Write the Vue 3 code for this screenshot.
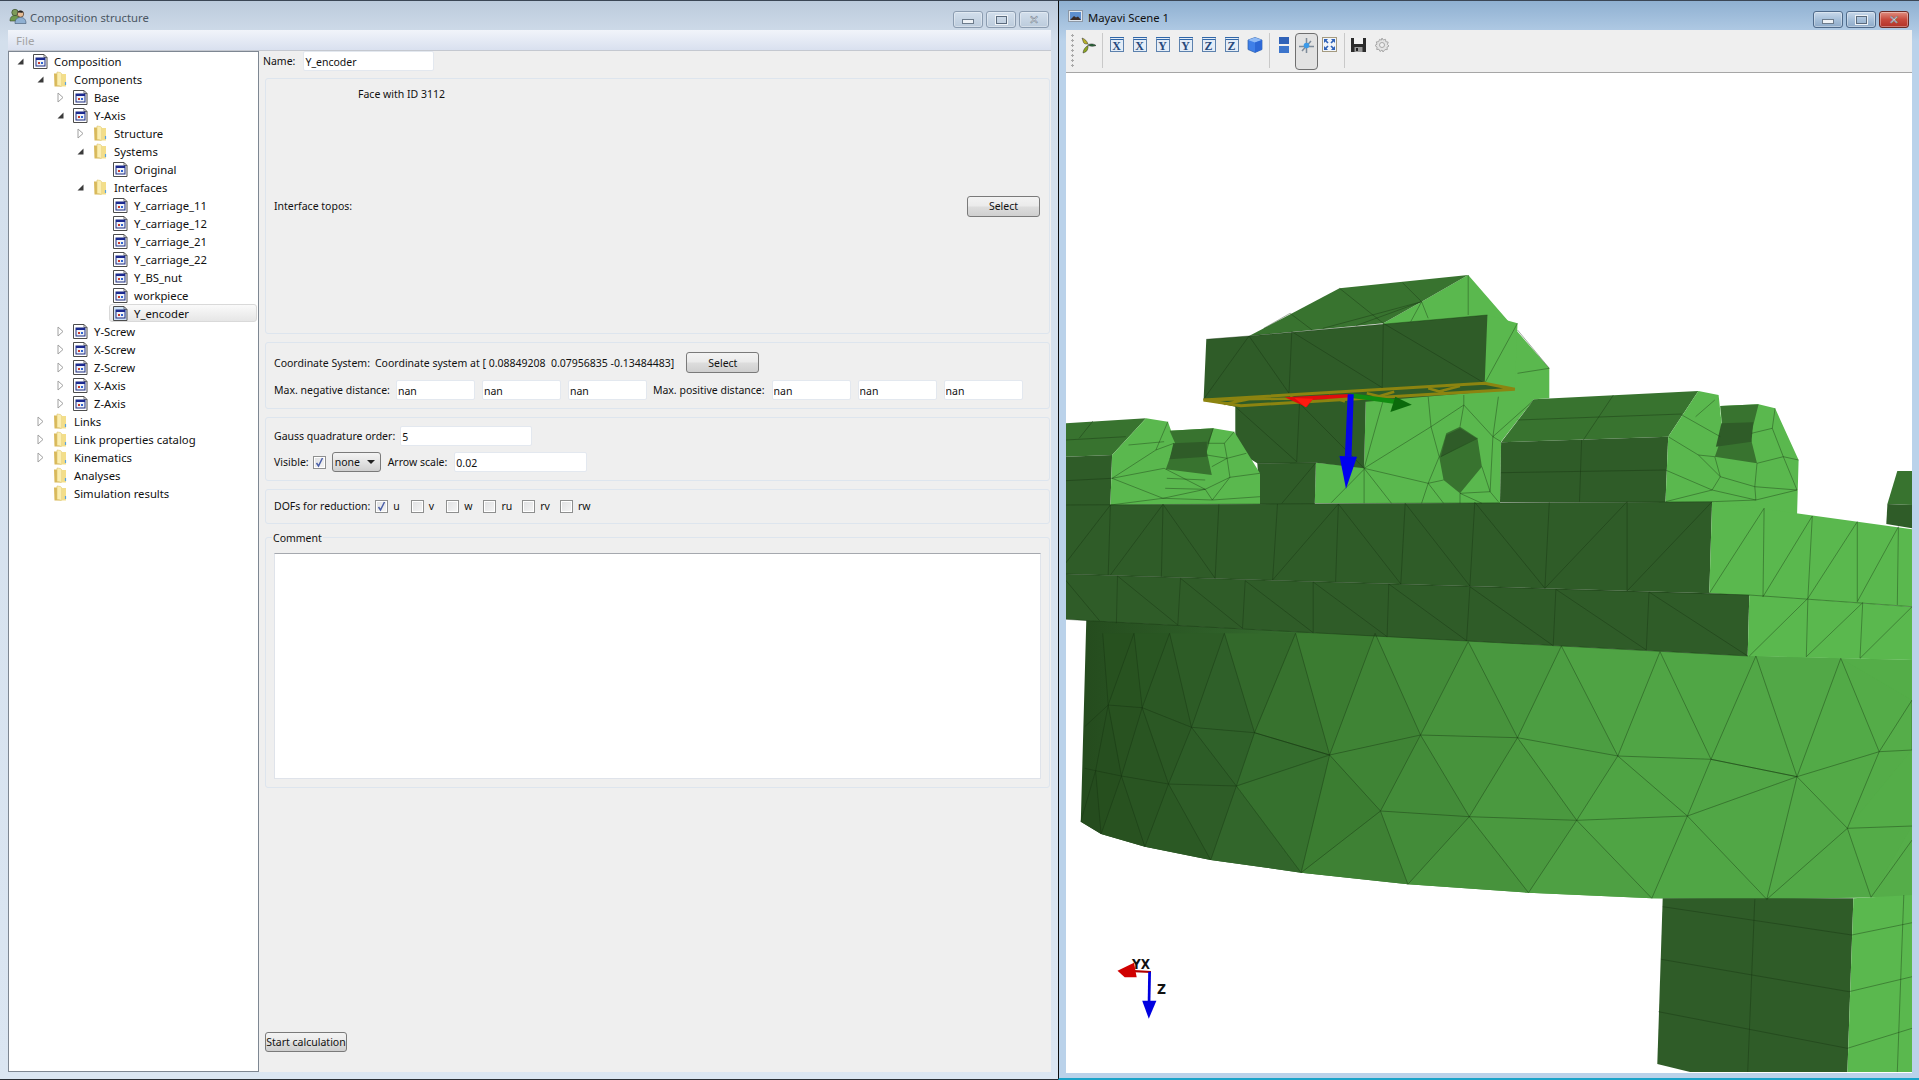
<script setup>
const tree = [
  { label: 'Composition', level: 0, arrow: 'open', icon: 'doc' },
  { label: 'Components', level: 1, arrow: 'open', icon: 'folder' },
  { label: 'Base', level: 2, arrow: 'closed', icon: 'doc' },
  { label: 'Y-Axis', level: 2, arrow: 'open', icon: 'doc' },
  { label: 'Structure', level: 3, arrow: 'closed', icon: 'folder' },
  { label: 'Systems', level: 3, arrow: 'open', icon: 'folder' },
  { label: 'Original', level: 4, arrow: '', icon: 'doc' },
  { label: 'Interfaces', level: 3, arrow: 'open', icon: 'folder' },
  { label: 'Y_carriage_11', level: 4, arrow: '', icon: 'doc' },
  { label: 'Y_carriage_12', level: 4, arrow: '', icon: 'doc' },
  { label: 'Y_carriage_21', level: 4, arrow: '', icon: 'doc' },
  { label: 'Y_carriage_22', level: 4, arrow: '', icon: 'doc' },
  { label: 'Y_BS_nut', level: 4, arrow: '', icon: 'doc' },
  { label: 'workpiece', level: 4, arrow: '', icon: 'doc' },
  { label: 'Y_encoder', level: 4, arrow: '', icon: 'doc', selected: true },
  { label: 'Y-Screw', level: 2, arrow: 'closed', icon: 'doc' },
  { label: 'X-Screw', level: 2, arrow: 'closed', icon: 'doc' },
  { label: 'Z-Screw', level: 2, arrow: 'closed', icon: 'doc' },
  { label: 'X-Axis', level: 2, arrow: 'closed', icon: 'doc' },
  { label: 'Z-Axis', level: 2, arrow: 'closed', icon: 'doc' },
  { label: 'Links', level: 1, arrow: 'closed', icon: 'folder' },
  { label: 'Link properties catalog', level: 1, arrow: 'closed', icon: 'folder' },
  { label: 'Kinematics', level: 1, arrow: 'closed', icon: 'folder' },
  { label: 'Analyses', level: 1, arrow: '', icon: 'folder' },
  { label: 'Simulation results', level: 1, arrow: '', icon: 'folder' },
];

const dofs = [
  { name: 'u', on: true, gap: 11 },
  { name: 'v', gap: 12 },
  { name: 'w', gap: 11 },
  { name: 'ru', gap: 10 },
  { name: 'rv', gap: 10 },
  { name: 'rw', gap: 0 },
];

const views = ['X', 'X', 'Y', 'Y', 'Z', 'Z'];

// mesh coordinates are read off two crops, so convert them back to page pixels
const DARK = '#2f5c28';
const MID = '#38732f';
const LIGHT = '#5ab84e';
const px = (x) => +(1060 + x / 1.825).toFixed(1);
const py = (y, top) => +(top + y / 3).toFixed(1);

function poly(fill, top, c) {
  const pts = [];
  for (let i = 0; i < c.length; i += 2) pts.push(px(c[i]) + ',' + py(c[i + 1], top));
  return { fill, points: pts.join(' ') };
}
function lines(top, list) {
  return list
    .map((c) => {
      let d = '';
      for (let i = 0; i < c.length; i += 2) d += (i ? 'L' : 'M') + px(c[i]) + ' ' + py(c[i + 1], top);
      return d;
    })
    .join('');
}

// cylinder is flat shaded, facet colour only depends on where it sits horizontally
const shadeStops = [
  [1085, [36, 74, 29]],
  [1115, [39, 81, 31]],
  [1224, [47, 96, 41]],
  [1334, [59, 124, 49]],
  [1443, [69, 144, 59]],
  [1608, [79, 163, 68]],
  [1827, [82, 169, 71]],
  [1912, [85, 174, 73]],
];
function shade(x) {
  let i = 0;
  while (i < shadeStops.length - 2 && x > shadeStops[i + 1][0]) i++;
  const [x0, a] = shadeStops[i];
  const [x1, b] = shadeStops[i + 1];
  const t = Math.max(0, Math.min(1, (x - x0) / (x1 - x0)));
  const c = a.map((v, k) => Math.round(v + (b[k] - v) * t));
  return `rgb(${c[0]},${c[1]},${c[2]})`;
}
function facet(a, b, c, d, e, f) {
  return poly(shade(px((a + c + e) / 3)), 640, [a, b, c, d, e, f]);
}
function zigzag(c) {
  const out = [];
  for (let i = 0; i + 5 < c.length; i += 2) out.push(facet(c[i], c[i + 1], c[i + 2], c[i + 3], c[i + 4], c[i + 5]));
  return out;
}

const zigTop = [78, -20, 88, 195, 135, -20, 150, 203, 200, -20, 240, 262, 300, -20, 355, 278, 430, -20, 492, 345, 575, -20, 658, 285, 745, 5, 835, 293, 915, 18, 1018, 348, 1095, 35, 1188, 358, 1270, 48, 1345, 410, 1425, 55, 1495, 335, 1555, 180, 1555, 330];
const zigMidA = [65, 392, 88, 195, 112, 408, 150, 203, 198, 432, 240, 262, 322, 438, 355, 278, 492, 345];
const zigMidB = [492, 345, 585, 513, 658, 285, 747, 530, 835, 293, 943, 541, 1018, 348, 1145, 528, 1188, 358, 1345, 410];
const zigBottom = [38, 545, 65, 392, 75, 582, 112, 408, 155, 620, 198, 432, 275, 660, 322, 438, 440, 698, 585, 513, 635, 733, 747, 530, 855, 758, 943, 541, 1080, 775, 1145, 528, 1290, 778, 1437, 565, 1480, 772, 1555, 558, 1555, 770];

const facets = [
  ...zigzag(zigTop),
  ...zigzag(zigMidA),
  ...zigzag(zigMidB),
  ...zigzag(zigBottom),
  facet(1425, 55, 1555, 60, 1555, 180),
  facet(322, 438, 492, 345, 440, 698),
  facet(492, 345, 585, 513, 440, 698),
  facet(1145, 528, 1345, 410, 1290, 778),
  facet(1345, 410, 1437, 565, 1290, 778),
  facet(1345, 410, 1437, 565, 1495, 335),
  facet(1437, 565, 1495, 335, 1555, 330),
  facet(1437, 565, 1555, 330, 1555, 558),
];

const faces = [
  // central column and top
  poly(LIGHT, 260, [745, 45, 893, 325, 893, 415, 865, 418, 805, 545, 803, 730, 465, 730, 467, 608, 555, 620, 558, 420, 590, 190, 660, 125]),
  poly(MID, 260, [345, 228, 510, 85, 745, 45, 660, 125, 590, 190]),
  poly(LIGHT, 260, [780, 165, 835, 190, 830, 390, 775, 370]),
  poly(DARK, 260, [267, 238, 345, 228, 780, 165, 775, 370, 262, 420]),
  poly(DARK, 260, [262, 420, 775, 370, 830, 388, 558, 425, 320, 440]),
  poly(DARK, 260, [320, 437, 558, 420, 555, 625, 467, 608, 360, 610, 320, 570]),
  poly(DARK, 260, [360, 610, 467, 608, 465, 732, 365, 732]),
  poly(MID, 260, [730, 500, 762, 535, 770, 620, 730, 700, 700, 660, 692, 590, 705, 520]),
  poly(DARK, 260, [705, 525, 730, 505, 760, 535, 695, 590]),
  // left lump
  poly(MID, 260, [10, 490, 157, 475, 95, 585, 10, 590]),
  poly(DARK, 260, [10, 590, 95, 585, 92, 735, 10, 735]),
  poly(LIGHT, 260, [157, 475, 197, 485, 210, 545, 200, 512, 280, 505, 318, 515, 365, 640, 365, 732, 92, 735, 95, 585]),
  poly(MID, 260, [200, 512, 280, 505, 268, 575, 277, 645, 193, 628, 210, 550]),
  poly(DARK, 260, [207, 550, 268, 545, 268, 590, 200, 598]),
  // right lump
  poly(MID, 260, [865, 418, 1165, 393, 1110, 530, 805, 547]),
  poly(DARK, 260, [805, 547, 1110, 530, 1105, 727, 803, 727]),
  poly(LIGHT, 260, [1165, 393, 1202, 405, 1210, 530, 1205, 438, 1275, 433, 1305, 445, 1348, 600, 1345, 770, 1190, 727, 1105, 727, 1110, 530]),
  poly(MID, 260, [1205, 438, 1275, 433, 1260, 530, 1272, 610, 1195, 590, 1210, 520]),
  poly(DARK, 260, [1207, 490, 1265, 487, 1262, 545, 1197, 560]),
  // far right stub
  poly(MID, 260, [1528, 633, 1555, 633, 1555, 735, 1510, 732]),
  poly(DARK, 260, [1510, 732, 1555, 735, 1555, 805, 1508, 792]),
  // belts
  poly(DARK, 260, [10, 735, 1190, 725, 1185, 1000, 10, 942]),
  poly(LIGHT, 260, [1190, 725, 1555, 808, 1555, 1040, 1185, 1000]),
  poly(DARK, 260, [10, 942, 1185, 1000, 1258, 1005, 1255, 1188, 52, 1082, 10, 1078]),
  poly(LIGHT, 260, [1258, 1005, 1555, 1040, 1555, 1200, 1255, 1188]),
];

const cylinder = poly('url(#cyl)', 640, [48, -60, 1255, 47, 1555, 60, 1555, 765, 1480, 772, 1290, 778, 1080, 775, 855, 758, 635, 733, 440, 698, 275, 660, 155, 620, 75, 582, 38, 545]);

const foot = [
  poly(DARK, 640, [1100, 775, 1448, 775, 1437, 1296, 1150, 1296, 1090, 1272]),
  poly(LIGHT, 640, [1448, 775, 1555, 765, 1555, 1296, 1437, 1296]),
];

const mesh =
  lines(260, [
    [372, 205, 420, 160, 460, 210],
    [510, 85, 590, 190],
    [625, 68, 660, 125, 480, 205],
    [540, 197, 660, 125],
    [345, 228, 262, 418],
    [345, 228, 418, 400],
    [423, 215, 418, 400],
    [423, 215, 590, 385],
    [590, 190, 588, 385],
    [590, 190, 775, 370],
    [267, 238, 345, 228, 780, 165],
    [835, 190, 775, 370],
    [835, 210, 893, 325],
    [835, 340, 893, 325],
    [745, 45, 745, 165],
    [660, 125, 640, 185],
    [660, 125, 672, 175],
    [320, 440, 432, 605],
    [437, 430, 432, 605],
    [437, 430, 555, 625],
    [360, 610, 467, 608],
    [467, 608, 405, 730],
    [555, 625, 677, 500],
    [555, 625, 672, 670],
    [555, 625, 605, 730],
    [555, 625, 555, 730],
    [555, 628, 495, 728],
    [590, 420, 555, 625],
    [672, 410, 677, 500],
    [737, 435, 677, 500],
    [737, 435, 730, 500],
    [737, 435, 790, 530],
    [737, 405, 737, 435],
    [800, 410, 790, 530],
    [865, 420, 790, 530],
    [805, 545, 790, 530],
    [790, 530, 785, 695],
    [677, 500, 692, 590],
    [692, 590, 672, 670],
    [672, 670, 660, 730],
    [672, 670, 700, 660],
    [672, 670, 700, 730],
    [730, 700, 730, 730],
    [730, 700, 770, 730],
    [785, 695, 730, 700],
    [785, 695, 800, 725],
    [770, 620, 785, 695],
    [762, 535, 695, 590],
    [60, 483, 35, 535],
    [10, 540, 120, 530],
    [10, 662, 95, 655],
    [95, 655, 190, 625],
    [95, 655, 188, 715],
    [92, 735, 188, 715],
    [188, 715, 265, 688],
    [188, 715, 278, 720],
    [278, 720, 265, 688],
    [265, 688, 310, 652],
    [310, 652, 365, 640],
    [310, 652, 278, 720],
    [278, 720, 365, 710],
    [190, 625, 265, 688],
    [195, 655, 265, 660],
    [192, 685, 265, 688],
    [95, 655, 175, 570],
    [175, 570, 208, 550],
    [197, 485, 175, 570],
    [125, 555, 190, 545],
    [280, 505, 270, 550],
    [318, 515, 300, 550],
    [300, 550, 270, 550],
    [300, 550, 305, 595],
    [305, 595, 340, 580],
    [305, 595, 268, 585],
    [305, 595, 310, 652],
    [277, 620, 305, 595],
    [1010, 405, 955, 540],
    [835, 480, 1135, 462],
    [952, 540, 948, 725],
    [805, 638, 1105, 630],
    [1105, 630, 1190, 690],
    [1105, 725, 1190, 690],
    [1190, 690, 1270, 720],
    [1270, 720, 1345, 690],
    [1205, 650, 1268, 680],
    [1205, 650, 1190, 690],
    [1268, 680, 1345, 690],
    [1268, 680, 1270, 720],
    [1195, 590, 1205, 650],
    [1165, 585, 1205, 650],
    [1110, 530, 1165, 585],
    [1165, 585, 1195, 590],
    [1135, 465, 1205, 530],
    [1195, 420, 1160, 470],
    [1272, 610, 1268, 680],
    [1272, 610, 1320, 590],
    [1320, 590, 1348, 600],
    [1320, 590, 1345, 690],
    [1305, 445, 1300, 505],
    [1300, 505, 1262, 520],
    [1300, 505, 1320, 590],
    [1270, 720, 1190, 725],
    // upper belt, dark side
    [10, 735, 1190, 725],
    [92, 735, 88, 945],
    [92, 735, 10, 910],
    [188, 733, 92, 945],
    [188, 733, 185, 950],
    [188, 733, 283, 955],
    [290, 733, 283, 955],
    [397, 732, 388, 960],
    [508, 732, 388, 960],
    [508, 732, 503, 965],
    [508, 732, 622, 972],
    [630, 730, 622, 972],
    [630, 730, 748, 978],
    [757, 727, 748, 978],
    [757, 727, 885, 985],
    [893, 727, 885, 985],
    [1035, 725, 885, 985],
    [1035, 725, 1035, 993],
    [1190, 725, 1035, 993],
    [10, 942, 1258, 1005],
    // lower belt
    [10, 960, 72, 1082],
    [105, 948, 103, 1090],
    [105, 948, 215, 1095],
    [220, 955, 215, 1095],
    [220, 955, 333, 1105],
    [338, 962, 333, 1105],
    [338, 962, 462, 1118],
    [462, 966, 462, 1118],
    [462, 966, 597, 1130],
    [600, 972, 597, 1130],
    [600, 972, 742, 1142],
    [748, 980, 742, 1142],
    [748, 980, 900, 1157],
    [905, 988, 900, 1157],
    [905, 988, 1070, 1170],
    [1075, 996, 1070, 1170],
    [1075, 996, 1255, 1188],
    [10, 1078, 52, 1082, 1255, 1188],
    // belts, light side
    [1285, 745, 1185, 1000],
    [1285, 745, 1283, 1010],
    [1373, 768, 1283, 1010],
    [1373, 768, 1365, 1015],
    [1455, 785, 1365, 1015],
    [1455, 785, 1455, 1025],
    [1530, 800, 1455, 1025],
    [1530, 800, 1528, 1035],
    [1365, 1015, 1258, 1188],
    [1365, 1015, 1362, 1190],
    [1465, 1028, 1362, 1190],
    [1465, 1028, 1460, 1195],
    [1555, 1040, 1460, 1195],
    [1258, 1005, 1555, 1040],
  ]) +
  lines(640, [
    zigTop,
    // rings
    [45, 260, 88, 195, 150, 203, 240, 262, 355, 278, 492, 345, 658, 285, 835, 293, 1018, 348, 1188, 358, 1345, 410, 1495, 335, 1555, 330],
    [45, 385, 65, 392, 112, 408, 198, 432, 322, 438, 492, 345],
    [585, 513, 747, 530, 943, 541, 1145, 528, 1345, 410],
    [1437, 565, 1555, 558],
    // middle ring to lower ring
    zigMidA,
    zigMidB,
    [1345, 410, 1437, 565, 1495, 335],
    [492, 345, 440, 698],
    [1345, 410, 1290, 778],
    // lower ring to bottom edge
    [38, 545, 65, 392, 75, 582, 112, 408, 155, 620, 198, 432, 275, 660, 322, 438, 440, 698, 585, 513, 635, 733, 747, 530, 855, 758, 943, 541, 1080, 775, 1145, 528, 1290, 778, 1437, 565, 1480, 772, 1555, 600],
    // foot
    [1268, 778, 1255, 1296],
    [1100, 800, 1445, 885, 1555, 848],
    [1097, 958, 1440, 1055, 1555, 1010],
    [1092, 1115, 1437, 1225, 1555, 1165],
    [1540, 765, 1528, 1296],
  ]);

const frameOuter = poly('none', 260, [262, 420, 775, 370, 830, 388, 330, 437]).points;
const frameInner = lines(260, [
  [420, 410, 450, 430],
  [560, 400, 590, 412],
  [610, 395, 570, 415],
  [690, 395, 730, 378],
  [672, 385, 700, 398],
  [300, 432, 345, 418],
  [490, 407, 520, 425],
  [262, 420, 560, 412],
]);

const red = [
  poly('#e00d0d', 260, [410, 412, 490, 405, 530, 402, 532, 412, 460, 420, 450, 442]),
  poly('#ff1a10', 260, [428, 414, 462, 416, 448, 442]),
];
const green = [
  poly('#118d11', 260, [532, 400, 612, 418, 612, 432, 560, 420, 532, 414]),
  poly('#0b6a0b', 260, [612, 410, 642, 434, 603, 456]),
];
const blueShaft = poly('#0505e8', 260, [525, 403, 536, 403, 532, 590, 520, 590]);
const blueHead = poly('#0000f0', 260, [510, 588, 542, 590, 522, 686]);

const axesBlue = poly('#0000e0', 640, [161, 995, 166, 995, 165, 1085, 160, 1085]);
const axesHead = poly('#0000e0', 640, [150, 1082, 176, 1082, 162, 1136]);
const axesRed = poly('#d00000', 640, [105, 992, 135, 968, 140, 1012, 118, 1012]);
const axesBar = poly('#b00000', 640, [135, 990, 166, 993, 166, 999, 135, 997]);
</script>

<template>
  <div class="desktop">
    <!-- left window: composition editor -->
    <section class="win win-left">
      <header class="title">
        <svg class="title-icon" width="18" height="18" viewBox="0 0 18 18">
          <circle cx="6" cy="5.500" r="3.200" fill="#7d9b5a" stroke="#3a4a2c" stroke-width=".7" />
          <path d="M1 14c0-4 2-5.500 5-5.500s5 1.500 5 5.500z" fill="#6f9a4e" stroke="#3a4a2c" stroke-width=".6" />
          <circle cx="11.500" cy="7" r="3.200" fill="#e6bd95" stroke="#4a3526" stroke-width=".7" />
          <path d="M8.500 5.500c.6-2.200 5-2.400 6 .1-2 .2-4 0-6-.1z" fill="#222" />
          <path d="M6 16.500c0-4.500 2.400-6 5.500-6s5.500 1.500 5.500 6z" fill="#8fb0d2" stroke="#3f5670" stroke-width=".6" />
        </svg>
        <span class="title-text inactive">Composition structure</span>
        <div class="caption">
          <button class="cap"><i class="glyph-min"></i></button>
          <button class="cap"><i class="glyph-max"></i></button>
          <button class="cap"><span class="glyph-x">✕</span></button>
        </div>
      </header>

      <div class="menubar"><span>File</span></div>

      <div class="body">
        <aside class="tree">
          <div v-for="row in tree" :key="row.label" class="row" :style="{ paddingLeft: 5 + row.level * 20 + 'px' }">
            <span class="arrow">
              <svg v-if="row.arrow === 'open'" width="9" height="9" viewBox="0 0 9 9">
                <path d="M7.500 1.500v6h-6z" fill="#3a3a3a" />
              </svg>
              <svg v-else-if="row.arrow === 'closed'" width="9" height="11" viewBox="0 0 9 11">
                <path d="M2 1l5 4.500-5 4.500z" fill="#fff" stroke="#a0a0a0" />
              </svg>
            </span>
            <span class="item" :class="{ selected: row.selected }">
              <svg v-if="row.icon === 'doc'" class="ico" width="15" height="16" viewBox="0 0 15 16">
                <path d="M.5 1.500h10.500l3 3v11h-13.500z" :fill="row.selected ? '#cfe1f5' : '#fff'" stroke="#4c4c4c" />
                <path d="M11 1.500v3h3" fill="none" stroke="#4c4c4c" stroke-width=".8" />
                <rect x="3" y="5" width="9" height="8" fill="#eef2f8" stroke="#1b2a80" />
                <rect x="3" y="5" width="9" height="2" fill="#1b2a90" />
                <rect x="5" y="9" width="2" height="2" fill="#c83a2c" />
                <rect x="8" y="9" width="2" height="2" fill="#2f62d0" />
              </svg>
              <svg v-else class="ico" width="15" height="16" viewBox="0 0 15 16">
                <path d="M1 2.500h6l1 1v12h-6.500z" fill="#d9b95a" />
                <path d="M4 1c3 .3 4 .6 4.500 1.500v13c-1.500-.6-3-.9-4.500-1z" fill="#fbeeb0" stroke="#dcc56d" stroke-width=".6" />
                <path d="M8.500 3h4.500v12.500h-4.500z" fill="#f3de8a" />
                <path d="M12.500 11v3" stroke="#5aa2dc" stroke-width="1.200" />
              </svg>
              <span class="row-label">{{ row.label }}</span>
            </span>
          </div>
        </aside>

        <main class="form">
          <div class="name-row">
            <label>Name:</label>
            <input class="field name-field" value="Y_encoder" />
          </div>

          <div class="group group-topo">
            <div class="face-line">Face with ID 3112</div>
            <div class="topo-line">
              <span>Interface topos:</span>
              <button class="btn btn-select">Select</button>
            </div>
          </div>

          <div class="group group-coord">
            <div class="line coord-line">
              <span>Coordinate System:</span>
              <span class="coord-value">Coordinate system at [ 0.08849208&nbsp; 0.07956835 -0.13484483]</span>
              <button class="btn btn-select btn-coord">Select</button>
            </div>
            <div class="line dist-line">
              <span>Max. negative distance:</span>
              <input class="field dist" value="nan" />
              <input class="field dist" value="nan" />
              <input class="field dist" value="nan" />
              <span>Max. positive distance:</span>
              <input class="field dist" value="nan" />
              <input class="field dist" value="nan" />
              <input class="field dist" value="nan" />
            </div>
          </div>

          <div class="group group-gauss">
            <div class="line">
              <span>Gauss quadrature order:</span>
              <input class="field gauss" value="5" />
            </div>
            <div class="line visible-line">
              <span>Visible:</span>
              <span class="check on"><svg width="11" height="11" viewBox="0 0 11 11"><path d="M2.500 6l2 3 4-8" fill="none" stroke="#4a5fa8" stroke-width="1.500" /></svg></span>
              <span class="combo">none<i></i></span>
              <span>Arrow scale:</span>
              <input class="field arrow-scale" value="0.02" />
            </div>
          </div>

          <div class="group group-dofs">
            <span class="dofs-label">DOFs for reduction:</span>
            <span v-for="d in dofs" :key="d.name" class="dof" :style="{ marginRight: d.gap + 'px' }">
              <span class="check" :class="{ on: d.on }">
                <svg v-if="d.on" width="11" height="11" viewBox="0 0 11 11"><path d="M2.500 6l2 3 4-8" fill="none" stroke="#4a5fa8" stroke-width="1.500" /></svg>
              </span>
              <span>{{ d.name }}</span>
            </span>
          </div>

          <div class="group group-comment">
            <span class="legend">Comment</span>
            <div class="comment-box"></div>
          </div>

          <button class="btn btn-start">Start calculation</button>
        </main>
      </div>
    </section>

    <!-- right window: 3D scene -->
    <section class="win win-right">
      <header class="title">
        <svg class="scene-icon" width="15" height="12" viewBox="0 0 15 12">
          <rect x=".5" y=".5" width="14" height="11" fill="#dfe6ee" stroke="#8d98a6" />
          <rect x="2" y="2" width="11" height="8" fill="#5e8fd0" />
          <path d="M2 10l4-4 2 1.500 2-1 3 3.500z" fill="#3a2b28" />
        </svg>
        <span class="title-text">Mayavi Scene 1</span>
        <div class="caption">
          <button class="cap active"><i class="glyph-min"></i></button>
          <button class="cap active"><i class="glyph-max"></i></button>
          <button class="cap active close"><span class="glyph-x">✕</span></button>
        </div>
      </header>

      <div class="toolbar">
        <span class="grip"></span>
        <span class="tool">
          <svg width="18" height="17" viewBox="0 0 18 17">
            <path d="M3 1c3 1 5 3 6 6-2 0-4 0-4.500-1.500C4 4 3.500 2.500 3 1z" fill="#b8b028" stroke="#333" stroke-width=".5" />
            <path d="M17 8.500c-3 1.200-5.500 1-8-.5 2-1.500 5.500-1.500 8 .5z" fill="#2a6a3a" stroke="#222" stroke-width=".5" />
            <path d="M4 16c.2-3 2-6 5-7.500 .4 2-.4 4.500-1.600 5.800C6.500 15.200 5.300 15.700 4 16z" fill="#8ca620" stroke="#333" stroke-width=".5" />
          </svg>
        </span>
        <span class="sep"></span>
        <span v-for="(v, i) in views" :key="i" class="tool"><span class="view">{{ v }}</span></span>
        <span class="tool">
          <svg width="16" height="16" viewBox="0 0 16 16">
            <path d="M8 .5l7 2.500v9.500l-7 3-7-3v-9.500z" fill="#3f7fe8" stroke="#2c5ea8" stroke-width=".7" />
            <path d="M1 3l7 2.500 7-2.500-7-2.500z" fill="#8fbaf5" />
            <path d="M8 5.500v10l7-3v-9.500z" fill="#2d68d6" />
          </svg>
        </span>
        <span class="sep"></span>
        <span class="tool">
          <svg width="10" height="16" viewBox="0 0 10 16">
            <rect width="10" height="7" fill="#2f62b8" />
            <rect y="9" width="10" height="7" fill="#3c75cc" />
          </svg>
        </span>
        <span class="tool pressed">
          <svg width="15" height="15" viewBox="0 0 15 15">
            <path d="M7.500 0v15M0 8.500h15M3 13l9-10" stroke="#7d8a99" stroke-width="1.500" fill="none" />
            <circle cx="7.500" cy="7.500" r="2.800" fill="#3c9ae8" />
          </svg>
        </span>
        <span class="tool">
          <svg width="15" height="15" viewBox="0 0 15 15">
            <rect x=".5" y=".5" width="14" height="14" fill="#f1f5fa" stroke="#a49a80" />
            <path d="M2 2h4l-1.400 1.400 2 2-1.200 1.200-2-2L2 6zM13 2v4l-1.400-1.400-2 2-1.200-1.200 2-2L9 2zM2 13V9l1.400 1.400 2-2 1.200 1.200-2 2L6 13zM13 13H9l1.400-1.400-2-2 1.200-1.200 2 2L13 9z" fill="#2f62b8" />
          </svg>
        </span>
        <span class="sep"></span>
        <span class="tool">
          <svg width="15" height="15" viewBox="0 0 15 15">
            <path d="M0 1h15v14H0z" fill="#2b2b2b" />
            <rect x="3" y="1" width="9" height="6" fill="#f2f2f2" />
            <rect x="3.500" y="10" width="8" height="5" fill="#9a9a9a" />
            <rect x="5" y="11" width="2" height="3" fill="#222" />
          </svg>
        </span>
        <span class="tool">
          <svg width="16" height="16" viewBox="0 0 16 16">
            <path d="M8 1l1.200 2 2.300-.7.300 2.400 2.400.4-.8 2.300 1.600 1.600-2 1.200.3 2.400-2.400 0L9 15l-1-2-2 1.500-1-2.200-2.300.2.400-2.400L1 8.500l2-1.300-.7-2.300 2.400-.2L5.500 2.400 7.300 3.200z" fill="#e4e4e4" stroke="#a8a8a8" />
            <circle cx="8" cy="8" r="2.500" fill="#efefef" stroke="#a8a8a8" />
          </svg>
        </span>
      </div>

      <div class="scene">
        <svg class="mesh" width="846" height="1000" viewBox="1066 73 846 1000" shape-rendering="geometricPrecision">
          <defs>
            <linearGradient id="cyl" gradientUnits="userSpaceOnUse" x1="1085" y1="0" x2="1912" y2="0">
              <stop offset="0" stop-color="#254c1e" />
              <stop offset=".17" stop-color="#2f6029" />
              <stop offset=".45" stop-color="#45903b" />
              <stop offset=".65" stop-color="#4fa344" />
              <stop offset="1" stop-color="#55ae49" />
            </linearGradient>
          </defs>
          <polygon :points="cylinder.points" :fill="cylinder.fill" />
          <polygon v-for="(f, i) in facets" :key="'c' + i" :points="f.points" :fill="f.fill" />
          <polygon v-for="(f, i) in foot" :key="'foot' + i" :points="f.points" :fill="f.fill" />
          <polygon v-for="(f, i) in faces" :key="i" :points="f.points" :fill="f.fill" />
          <path :d="mesh" fill="none" stroke="#14300f" stroke-width=".6" stroke-opacity=".65" />

          <polygon :points="frameOuter" fill="none" stroke="#8c8410" stroke-width="3" />
          <path :d="frameInner" fill="none" stroke="#8c8410" stroke-width="2.500" />

          <polygon v-for="(f, i) in red" :key="'r' + i" :points="f.points" :fill="f.fill" />
          <polygon v-for="(f, i) in green" :key="'g' + i" :points="f.points" :fill="f.fill" />
          <polygon :points="blueShaft.points" :fill="blueShaft.fill" />
          <polygon :points="blueHead.points" :fill="blueHead.fill" />

          <polygon :points="axesBar.points" :fill="axesBar.fill" />
          <polygon :points="axesRed.points" :fill="axesRed.fill" />
          <polygon :points="axesBlue.points" :fill="axesBlue.fill" />
          <polygon :points="axesHead.points" :fill="axesHead.fill" />
          <text x="1132" y="969" class="axis-label" textLength="18" lengthAdjust="spacingAndGlyphs">YX</text>
          <text x="1157" y="994" class="axis-label" textLength="9" lengthAdjust="spacingAndGlyphs">Z</text>
        </svg>
      </div>
    </section>
  </div>
</template>

<style scoped>
.desktop {
  display: flex;
  width: 1919px;
  height: 1080px;
  overflow: hidden;
  font-family: "Noto Sans", "Liberation Sans", sans-serif;
  font-size: 11.3px;
  color: #111;
}
.win {
  display: flex;
  flex-direction: column;
  height: 1080px;
  box-sizing: border-box;
  border-top: 1px solid #3b4655;
}
.win-left {
  width: 1058px;
  padding: 0 7px 7px 8px;
  background: linear-gradient(#bccbdc, #d3dfec 40px, #dbe6f2);
  border-bottom: 1px solid #2a2f35;
}
.win-right {
  flex: 1;
  padding: 0 7px 5px 7px;
  background: linear-gradient(#8fb0d1, #bad2ea 40px, #bad2ea);
  border-left: 1px solid #0c0c0c;
  border-bottom: 2px solid #1aa3c9;
}
.title {
  display: flex;
  align-items: center;
  height: 29px;
  flex: none;
}
.title-icon {
  margin-left: 1px;
  margin-right: 3px;
}
.scene-icon {
  margin-left: 2px;
  margin-right: 5px;
}
.title-text {
  font-size: 11.3px;
  margin-top: 3px;
}
.title-text.inactive {
  color: #4b5763;
}
.caption {
  display: flex;
  gap: 3px;
  margin-left: auto;
  margin-right: 2px;
  align-self: flex-start;
  margin-top: 10px;
}
.win-right .caption {
  margin-right: 3px;
}
.cap {
  width: 30px;
  height: 17px;
  padding: 0;
  display: flex;
  align-items: center;
  justify-content: center;
  border: 1px solid #8b9cb0;
  border-radius: 3px;
  background: linear-gradient(#d2dfec, #bccbdc);
  box-shadow: inset 0 0 0 1px rgba(255, 255, 255, 0.35);
}
.cap.active {
  border-color: #4f6a8a;
  background: linear-gradient(#c9d9ea, #a7c0da 50%, #8eaac8);
}
.cap.close {
  border-color: #6b2a24;
  background: linear-gradient(#e08e80, #c84a3c 50%, #b23228);
}
.glyph-min {
  display: block;
  width: 10px;
  height: 3px;
  margin-top: 4px;
  background: #eef2f6;
  border: 1px solid #6d7c8c;
}
.glyph-max {
  display: block;
  width: 9px;
  height: 6px;
  background: transparent;
  border: 1.500px solid #5c6c7e;
  outline: 1px solid #eef2f6;
}
.glyph-x {
  font-family: "DejaVu Sans", sans-serif;
  font-size: 12px;
  font-weight: 700;
  line-height: 1;
  color: #f2f4f7;
  -webkit-text-stroke: 0.5px #6a7786;
}
.menubar {
  flex: none;
  height: 21px;
  display: flex;
  align-items: center;
  padding-left: 8px;
  background: linear-gradient(#f1f4fa, #d9e0ef);
  border-bottom: 1px solid #c4c8d0;
  box-sizing: border-box;
  color: #a4a4a4;
  font-size: 11.5px;
}
.body {
  flex: 1;
  display: flex;
  min-height: 0;
  background: #efefef;
}
.tree {
  width: 251px;
  flex: none;
  box-sizing: border-box;
  border: 1px solid #7e8792;
  background: #fff;
  overflow: hidden;
}
.row {
  display: flex;
  align-items: center;
  height: 18px;
}
.arrow {
  width: 12px;
  flex: none;
  display: flex;
  align-items: center;
  justify-content: center;
}
.item {
  flex: 1;
  display: flex;
  align-items: center;
  height: 18px;
  margin-left: 3px;
  margin-right: 1px;
  padding-left: 4px;
  box-sizing: border-box;
  border: 1px solid transparent;
  border-left-width: 0;
}
.item.selected {
  border: 1px solid #d9d9d9;
  padding-left: 3px;
  border-radius: 3px;
  background: linear-gradient(#fafafa, #e6e6e6);
}
.ico {
  flex: none;
}
.row-label {
  margin-left: 6px;
  white-space: nowrap;
  color: #101010;
}
.form {
  flex: 1;
  display: flex;
  flex-direction: column;
  min-width: 0;
  padding-left: 6px;
  font-size: 10.5px;
}
.field {
  box-sizing: border-box;
  height: 20px;
  border: 1px solid #e3e8ef;
  border-radius: 2px;
  background: #fff;
  padding: 1px 1px 0;
  font-family: inherit;
  font-size: 10.5px;
  color: #111;
  outline: none;
}
.name-row {
  display: flex;
  align-items: center;
  height: 20px;
  flex: none;
}
.name-row label {
  margin-left: -2px;
}
.name-field {
  width: 131px;
  margin-left: 8px;
}
.group {
  flex: none;
  box-sizing: border-box;
  margin-right: 1px;
  border: 1px solid #dde5ee;
  border-radius: 3px;
}
.group-topo {
  height: 256px;
  margin-top: 7px;
  padding: 0 9px 0 8px;
  display: flex;
  flex-direction: column;
}
.face-line {
  margin-top: 8px;
  height: 15px;
  line-height: 15px;
  padding-left: 84px;
}
.topo-line {
  display: flex;
  align-items: center;
  justify-content: space-between;
  height: 20px;
  margin-top: 94px;
}
.btn {
  box-sizing: border-box;
  padding: 0;
  border: 1px solid #7a7a7a;
  border-radius: 3px;
  background: linear-gradient(#f3f3f3, #ebebeb 45%, #dcdcdc 55%, #cfcfcf);
  font-family: inherit;
  font-size: 10.5px;
  color: #111;
}
.btn-select {
  width: 73px;
  height: 21px;
}
.group-coord {
  height: 67px;
  margin-top: 8px;
  padding: 9px 8px 0;
}
.line {
  display: flex;
  align-items: center;
  height: 20px;
}
.coord-line {
  height: 21px;
}
.coord-value {
  margin-left: 5px;
  white-space: nowrap;
}
.btn-coord {
  margin-left: 12px;
}
.dist-line {
  margin-top: 7px;
  white-space: nowrap;
}
.dist {
  width: 79px;
  margin-left: 7px;
}
.dist-line span:first-child + .dist {
  margin-left: 6px;
}
.dist-line span + .dist {
  margin-left: 7px;
}
.dist-line .dist + span {
  margin-left: 6px;
}
.group-gauss {
  height: 64px;
  margin-top: 8px;
  padding: 8px 8px 0;
}
.gauss {
  width: 132px;
  margin-left: 5px;
}
.visible-line {
  margin-top: 6px;
}
.check {
  box-sizing: border-box;
  display: inline-flex;
  align-items: center;
  justify-content: center;
  width: 13px;
  height: 13px;
  border: 1px solid #8e8f8f;
  background: linear-gradient(135deg, #dfe0e2, #f5f5f5);
  box-shadow: inset 0 0 0 1px #fff;
}
.visible-line .check {
  margin-left: 4px;
}
.combo {
  box-sizing: border-box;
  width: 49px;
  height: 20px;
  margin-left: 6px;
  padding-left: 2px;
  display: flex;
  align-items: center;
  justify-content: space-between;
  border: 1px solid #7a7a7a;
  border-radius: 3px;
  background: linear-gradient(#f3f3f3, #e3e3e3 50%, #cfcfcf);
}
.combo i {
  width: 0;
  height: 0;
  margin-right: 5px;
  border-left: 4px solid transparent;
  border-right: 4px solid transparent;
  border-top: 4px solid #222;
}
.visible-line .combo + span {
  margin-left: 7px;
}
.arrow-scale {
  width: 133px;
  margin-left: 7px;
}
.group-dofs {
  height: 35px;
  margin-top: 8px;
  padding: 0 0 1px 8px;
  display: flex;
  align-items: center;
}
.dofs-label {
  margin-right: 5px;
}
.dof {
  display: inline-flex;
  align-items: center;
  gap: 5px;
}
.group-comment {
  height: 251px;
  margin-top: 13px;
  padding: 15px 8px 0 8px;
  position: relative;
}
.legend {
  position: absolute;
  top: -7px;
  left: 6px;
  padding: 0 1px;
  background: #efefef;
}
.comment-box {
  height: 226px;
  box-sizing: border-box;
  background: #fff;
  border: 1px solid #dfe3ea;
  border-top-color: #a5a8ae;
}
.btn-start {
  width: 82px;
  height: 20px;
  margin-top: auto;
  margin-bottom: 20px;
}
.toolbar {
  flex: none;
  height: 43px;
  box-sizing: border-box;
  display: flex;
  align-items: flex-start;
  padding: 3px 0 0 5px;
  background: #efefef;
  border-bottom: 1px solid #a6a6a6;
}
.grip {
  width: 3px;
  height: 36px;
  margin-right: 2px;
  background-image: radial-gradient(circle, #a9a9a9 1px, transparent 1.200px);
  background-size: 3px 5px;
}
.tool {
  width: 23px;
  height: 37px;
  flex: none;
  box-sizing: border-box;
  display: flex;
  align-items: flex-start;
  justify-content: center;
  padding-top: 4px;
}
.tool.pressed {
  border: 1px solid #6f6f6f;
  border-radius: 4px;
  background: #e2e2e2;
  padding-top: 4px;
}
.sep {
  width: 6px;
  height: 35px;
  flex: none;
  background: linear-gradient(#c9c9c9, #c9c9c9) center / 1px 100% no-repeat;
}
.view {
  box-sizing: border-box;
  width: 14px;
  height: 15px;
  display: flex;
  align-items: center;
  justify-content: center;
  border: 1px solid #5c81ad;
  border-top: 3px double #2f66a8;
  background: #e4edf7;
  font-family: "Liberation Serif", serif;
  font-size: 12px;
  font-weight: 700;
  line-height: 1;
  color: #27497c;
}
.scene {
  flex: 1;
  min-height: 0;
  background: #fff;
  overflow: hidden;
}
.mesh {
  display: block;
}
.axis-label {
  font-family: "DejaVu Sans", sans-serif;
  font-size: 14px;
  font-weight: 700;
  fill: #111;
}
</style>
